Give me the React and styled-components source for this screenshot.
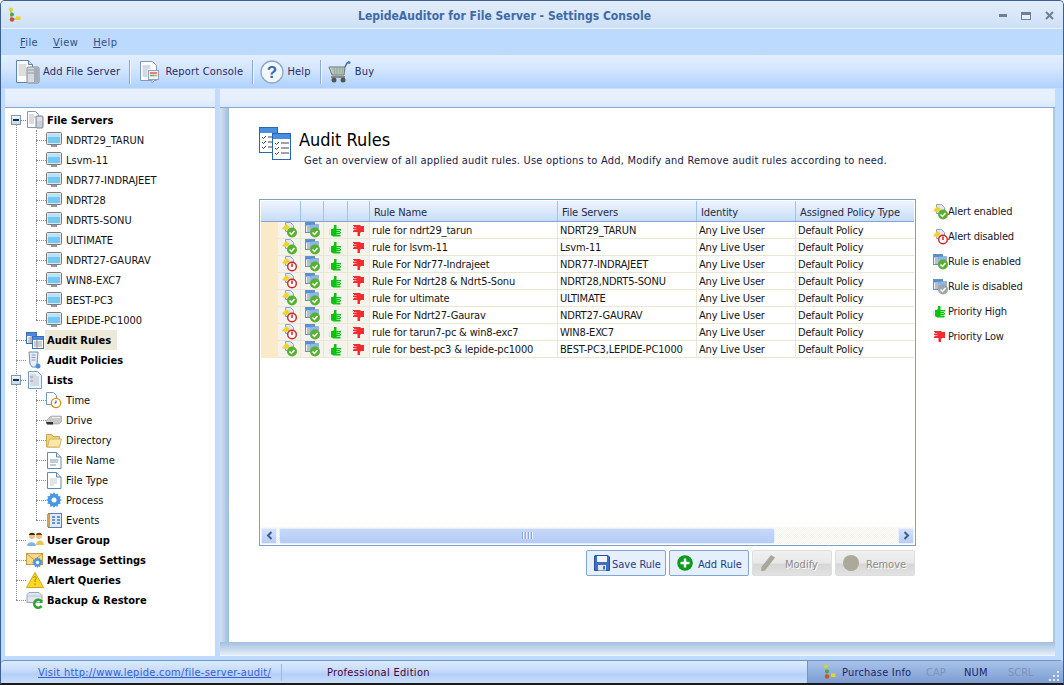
import React from "react";
import styled, { createGlobalStyle } from "styled-components";

const GlobalStyle = createGlobalStyle`
  html, body { margin: 0; padding: 0; background: #fff; }
  body { font-family: "DejaVu Sans Condensed", "DejaVu Sans", sans-serif; font-stretch: condensed; font-size: 11px; color: #111; }
  * { box-sizing: border-box; }
`;

const Window = styled.div`
  width: 1064px;
  height: 685px;
  display: flex;
  flex-direction: column;
  background: #bfdbff;
  border-top: 1px solid #3a5f92;
  border-left: 1px solid #3a5f92;
  border-right: 1px solid #3a5f92;
  border-bottom: 2px solid #1a1a1a;
  border-radius: 5px 5px 0 0;
  overflow: hidden;
`;

const TitleBar = styled.div`
  height: 28px;
  flex: none;
  display: flex;
  align-items: center;
  padding: 0 6px 0 7px;
  background: linear-gradient(#e2edfb, #d9e7f9 45%, #cfe0f6);
  border-bottom: 1px solid #e8f1fd;
`;

const Title = styled.div`
  flex: 1;
  text-align: center;
  padding: 2px 14px 0 0;
  font-size: 12px;
  font-weight: 700;
  letter-spacing: 0.03px;
  color: #3e6aa8;
`;

const Controls = styled.div`
  display: flex;
  align-items: center;
  gap: 14px;
  padding: 2px 3px 0 0;
`;

const MenuBar = styled.div`
  height: 26px;
  flex: none;
  display: flex;
  align-items: center;
  gap: 15px;
  padding: 1px 0 0 19px;
  background: #bcd9fe;
`;

const MenuItem = styled.span`
  color: #2c4f8c;
  letter-spacing: 0.4px;
  u { text-decoration: underline; }
`;

const Toolbar = styled.div`
  height: 33px;
  flex: none;
  display: flex;
  align-items: center;
  padding-left: 14px;
  letter-spacing: 0.2px;
  background: linear-gradient(#e3efff, #d3e5fe 45%, #aed1fe);
`;

const ToolButton = styled.div`
  display: flex;
  align-items: center;
  gap: ${(p) => p.$gap}px;
  color: #2a2a66;
`;

const ToolSep = styled.div`
  width: 1px;
  height: 24px;
  margin: 0 ${(p) => p.$after}px 0 9px;
  background: #8aa9d0;
  box-shadow: 1px 0 0 #f0f6ff;
`;

const Body = styled.div`
  flex: 1;
  min-height: 0;
  display: flex;
  padding: 0 0 4px 4px;
`;

const LeftPane = styled.div`
  width: 210px;
  flex: none;
  display: flex;
  flex-direction: column;
`;

const RightPane = styled.div`
  flex: 1;
  min-width: 0;
  margin-left: 4px;
  margin-right: 8px;
  display: flex;
  flex-direction: column;
  border-left: 1px solid #c9dcf2;
`;

const PaneHead = styled.div`
  height: 20px;
  flex: none;
  background: linear-gradient(#e8f0fd, #e6effc 55%, #dbe8fa);
  border-top: 1px solid #cfe0f6;
  border-bottom: 1px solid #87a9d6;
`;

const TreeBox = styled.div`
  flex: 1;
  position: relative;
  background: #fff;
  padding: 2px 0 0 1px;
`;

const Row = styled.div`
  height: 20px;
  display: flex;
  align-items: center;
  position: relative;
  padding-left: ${(p) => (p.$child ? 30 : 10)}px;
`;

const Connector = styled.span`
  width: 10px;
  flex: none;
  border-top: 1px dotted #8e8e8e;
`;

const IconSlot = styled.span`
  width: ${(p) => (p.$child ? 16 : 18)}px;
  height: 18px;
  flex: none;
  display: flex;
  align-items: center;
  justify-content: center;
  margin-right: ${(p) => (p.$child ? 2 : 1)}px;
`;

const Label = styled.span`
  font-weight: ${(p) => (p.$bold ? 700 : 400)};
  padding: 3px ${(p) => (p.$active ? 6 : 2)}px 2px 2px;
  line-height: 15px;
  background: ${(p) => (p.$active ? "#ece9d8" : "transparent")};
  color: ${(p) => (p.$bold ? "#000" : "#111")};
  white-space: nowrap;
`;

const Expander = styled.span`
  position: absolute;
  left: 5px;
  top: 5px;
  width: 10px;
  height: 10px;
  background: linear-gradient(#f4f8fc, #c5d8ea);
  border: 1px solid #7c97b2;
  &::after {
    content: "";
    position: absolute;
    left: 1px;
    top: 3px;
    width: 6px;
    height: 2px;
    background: #10304e;
  }
`;

const TrunkLine = styled.div`
  position: absolute;
  left: 11px;
  top: 16px;
  height: 476px;
  border-left: 1px dotted #8e8e8e;
`;

const BranchGroup = styled.div`
  position: relative;
  &::before {
    content: "";
    position: absolute;
    left: 30px;
    top: 0;
    bottom: 10px;
    border-left: 1px dotted #8e8e8e;
  }
`;

const Workspace = styled.div`
  flex: 1;
  min-height: 0;
  display: flex;
  flex-direction: column;
`;

const Frame = styled.div`
  flex: 1;
  min-height: 0;
  display: flex;
  background: linear-gradient(90deg, #d3e2f3, #9fbcda 9px, #c6daef 9px, #c6daef calc(100% - 8px), #a9c5e0);
  padding: 0 8px 0 9px;
`;

const Card = styled.div`
  flex: 1;
  background: #fff;
  padding: 19px 30px 0;
`;

const Foot = styled.div`
  height: 14px;
  flex: none;
  background: linear-gradient(#a3bfdc, #e4eefa);
  border-bottom: 1px solid #eef5fd;
`;

const Heading = styled.div`
  display: flex;
  gap: 8px;
  height: 72px;
`;

const HeadText = styled.div`
  padding-top: 1px;
`;

const HeadTitle = styled.h1`
  margin: 0;
  font-size: 18px;
  font-weight: 400;
  line-height: 24px;
  color: #000;
`;

const HeadSub = styled.p`
  margin: 1px 0 0 5px;
  line-height: 15px;
  letter-spacing: 0.21px;
  color: #1a1a4a;
  white-space: nowrap;
`;

const Columns = styled.div`
  display: flex;
`;

const Main = styled.div`
  width: 657px;
  flex: none;
  display: flex;
  flex-direction: column;
`;

const GridBox = styled.div`
  height: 347px;
  display: flex;
  flex-direction: column;
  border: 1px solid #7f9fc5;
  padding: 1px;
  background: #fff;
`;

const GridHead = styled.div`
  display: grid;
  grid-template-columns: 40px 23px 24px 22px 188px 139px 99px 1fr;
  height: 21px;
  flex: none;
  background: linear-gradient(#edf4fe, #dbe9fb 50%, #c7dcf7);
  border-bottom: 1px solid #82a5d2;
`;

const HeadCell = styled.div`
  display: flex;
  align-items: center;
  padding: 2px 0 0 4px;
  border-right: 1px solid #9cc4ee;
  color: #1e2a44;
  letter-spacing: -0.1px;
  white-space: nowrap;
  &:last-child { border-right: 0; }
`;

const GridRows = styled.div`
  flex: 1;
  min-height: 0;
`;

const GridRow = styled.div`
  display: grid;
  grid-template-columns: 17px 23px 23px 24px 22px 188px 139px 99px 1fr;
  height: 17px;
`;

const Gutter = styled.div`
  background: #fbeaca;
`;

const GlyphCell = styled.div`
  background: #f5f4ec;
  border-right: 1px solid #e9e6d4;
  border-bottom: 1px solid #e9e6d4;
  display: flex;
  align-items: center;
  justify-content: center;
`;

const TextCell = styled.div`
  display: flex;
  align-items: center;
  padding-left: 2px;
  border-right: 1px solid #e9e6d4;
  border-bottom: 1px solid #e9e6d4;
  color: #151515;
  letter-spacing: -0.17px;
  white-space: nowrap;
  &:last-child { border-right: 0; }
`;

const HScroll = styled.div`
  height: 17px;
  flex: none;
  display: flex;
  align-items: center;
  background: repeating-conic-gradient(#f4f3ea 0% 25%, #fff 0% 50%) 0 0 / 2px 2px;
`;

const ScrollBtn = styled.div`
  width: 16px;
  height: 16px;
  flex: none;
  display: flex;
  align-items: center;
  justify-content: center;
  background: linear-gradient(#d5e3fb, #b6cdf4);
  border: 1px solid #e9f0fc;
`;

const ScrollThumb = styled.div`
  width: 496px;
  height: 16px;
  margin-left: 2px;
  display: flex;
  align-items: center;
  justify-content: center;
  gap: 1px;
  background: linear-gradient(#c6d8f9, #b6ccf6);
  border: 1px solid #e6eefb;
  border-radius: 2px;
`;

const Grip = styled.i`
  width: 1px;
  height: 7px;
  background: #8aa6d8;
  box-shadow: 1px 0 0 #eef4ff;
  margin-right: 1px;
`;

const ScrollFill = styled.div`
  flex: 1;
`;

const Actions = styled.div`
  display: flex;
  justify-content: flex-end;
  gap: 3px;
  margin-top: 4px;
  margin-right: 1px;
`;

const ActionBtn = styled.button`
  width: 80px;
  height: 26px;
  padding: 2px 0 0 7px;
  display: flex;
  align-items: center;
  gap: ${(p) => p.$gap}px;
  font: inherit;
  letter-spacing: 0;
  border-radius: 2px;
  border: 1px solid ${(p) => (p.disabled ? "#dedede" : "#7fa5d6")};
  background: ${(p) => (p.disabled ? "linear-gradient(#f0f0f0 0%, #e8e8e8 50%, #d6d6d6 55%, #e2e2e2 100%)" : "#e6effc")};
  color: ${(p) => (p.disabled ? "#8c8c8c" : "#1c3c88")};
  text-shadow: ${(p) => (p.disabled ? "1px 1px 0 #fff" : "none")};
  svg { margin-top: -2px; }
`;

const Legend = styled.div`
  padding-left: 17px;
  padding-top: 5px;
  display: flex;
  flex-direction: column;
  gap: 10px;
`;

const LegendItem = styled.div`
  display: flex;
  align-items: center;
  height: 15px;
  color: #1a1a2a;
  letter-spacing: -0.17px;
  white-space: nowrap;
`;

const LegendGlyph = styled.span`
  width: 15px;
  flex: none;
  display: flex;
  align-items: center;
`;

const StatusBar = styled.div`
  height: 23px;
  flex: none;
  display: flex;
  align-items: center;
  background: linear-gradient(#dceafd, #c9defb 40%, #b4d0f8 60%, #c9ddfa);
  border-top: 1px solid #6f93c4;
  padding-left: 37px;
  border-radius: 4px 4px 0 0;
`;

const StatusLink = styled.a`
  width: 243px;
  color: #3a5fd0;
  letter-spacing: 0.28px;
  text-decoration: underline;
  white-space: nowrap;
`;

const StatusSep = styled.span`
  width: 1px;
  height: 17px;
  background: #9db8dc;
`;

const Edition = styled.span`
  margin-left: 45px;
  color: #4a0038;
  letter-spacing: 0.3px;
  white-space: nowrap;
`;

const StatusRight = styled.div`
  margin-left: auto;
  width: 256px;
  height: 100%;
  display: flex;
  align-items: center;
  position: relative;
  padding-left: 15px;
  background: linear-gradient(#a8c3ea, #92b0de 50%, #7c9dd2);
  border-left: 1px solid #6f93c4;
`;

const StatusText = styled.span`
  color: ${(p) => (p.$off ? "#7f93b5" : "#1f1f6a")};
  width: ${(p) => p.$w}px;
  margin-left: ${(p) => p.$ml || 0}px;
  letter-spacing: ${(p) => (p.$off ? 0 : 0.2)}px;
  white-space: nowrap;
`;

const Resize = styled.svg`
  position: absolute;
  right: 3px;
  bottom: 2px;
`;

/* icons */
const Logo = () => (
  <svg width="16" height="16" viewBox="0 0 16 16">
    <path d="M3 3v9h6" stroke="#a8a86a" strokeWidth="1" fill="none" />
    <circle cx="3" cy="2.500" r="2" fill="#d8d820" />
    <circle cx="4" cy="7.500" r="2" fill="#45a845" />
    <circle cx="4" cy="12.500" r="2.200" fill="#c8502a" />
    <rect x="8" y="9.500" width="4.500" height="3.500" fill="#f0d020" />
  </svg>
);

const Monitor = () => (
  <svg width="16" height="16" viewBox="0 0 16 16">
    <rect x="0.5" y="0.5" width="15" height="12" rx="1" fill="#e4e4e4" stroke="#7c7c7c" />
    <rect x="2" y="2" width="12" height="9" fill="#72c8f4" />
    <rect x="2" y="2" width="12" height="3" fill="#b4e4fc" />
    <rect x="5" y="13" width="6" height="2" fill="#999" />
  </svg>
);

const ServerDoc = () => (
  <svg width="18" height="18" viewBox="0 0 18 18">
    <path d="M1.5.5h8l3 3v13h-11z" fill="#fff" stroke="#7a9cbc" />
    <path d="M3 4h5M3 6h7M3 8h5M3 10h5M3 12h5" stroke="#b8b8b8" />
    <rect x="10" y="5" width="7" height="12" rx="1" fill="#c8ced6" stroke="#7d8794" />
    <path d="M11 7h5M11 9h5" stroke="#f4f4f4" />
  </svg>
);

const TableIcon = () => (
  <svg width="18" height="18" viewBox="0 0 18 18">
    <rect x="0.5" y="1.5" width="10" height="11" fill="#fff" stroke="#3a6cb8" />
    <rect x="1" y="2" width="9" height="3" fill="#4a8ade" />
    <path d="M2 7h7M2 9h7M2 11h7M5 5v7" stroke="#9a9a9a" />
    <rect x="6.5" y="5.5" width="11" height="12" fill="#fff" stroke="#3a6cb8" />
    <rect x="7" y="6" width="10" height="3" fill="#4a8ade" />
    <path d="M8 11h8M8 13h8M8 15h8M11 9v8" stroke="#9a9a9a" />
  </svg>
);

const ScrollIcon = () => (
  <svg width="18" height="18" viewBox="0 0 18 18">
    <path d="M3 1h9l-1 12 3 3H6l-2-3z" fill="#e6eef8" stroke="#6e8eb0" />
    <path d="M5.500 4h4M5.500 6.500h4M5.500 9h4" stroke="#7e9ac0" />
    <circle cx="12" cy="15" r="2.500" fill="#4a90e0" />
  </svg>
);

const ListDoc = () => (
  <svg width="16" height="18" viewBox="0 0 16 18">
    <path d="M1.500.5h9l4 4v13h-13z" fill="#eaf2fb" stroke="#7a9cbc" />
    <path d="M3 4h6M3 6h9M3 8h9M3 10h9M3 12h9M3 14h9" stroke="#b6c2d2" />
    <path d="M3 6h3M3 10h3" stroke="#d88070" />
  </svg>
);

const ClockDoc = () => (
  <svg width="16" height="17" viewBox="0 0 16 17">
    <path d="M.5.5h7l3 3v9h-10z" fill="#fff" stroke="#7a9cbc" />
    <circle cx="10" cy="11" r="4.700" fill="#fff" stroke="#d8901c" strokeWidth="1.300" />
    <path d="M10 8.500V11h-1.500" stroke="#444" fill="none" />
  </svg>
);

const DriveIcon = () => (
  <svg width="16" height="12" viewBox="0 0 16 12">
    <path d="M0 7l5-5h10l1 1v4l-3 3H1z" fill="#c8c8c8" stroke="#8a8a8a" strokeWidth="0.500" />
    <path d="M0 8h7v2.500H1z" fill="#333" />
    <path d="M6 3.500h8" stroke="#f2f2f2" />
  </svg>
);

const FolderIcon = () => (
  <svg width="16" height="15" viewBox="0 0 16 15">
    <path d="M.5 14V1.500h5l1.500 2h6.500V14z" fill="#f2d47c" stroke="#c8a850" />
    <path d="M1.500 14l2-8h12l-2 8z" fill="#fbe8a8" stroke="#d4b464" />
  </svg>
);

const FileLines = ({ dense }) => (
  <svg width="15" height="17" viewBox="0 0 15 17">
    <path d="M.5.500h9l4.500 4.500v11.500H.5z" fill="#fff" stroke="#5f8ab0" />
    <path d="M9.500.500v4.500H14" fill="#dbe8f4" stroke="#5f8ab0" />
    {dense ? (
      <path d="M3 7h7M3 9h7M3 11h7M3 13h4" stroke="#c4ccd6" />
    ) : (
      <path d="M3 8h8.500M3 10h8M3 13h6" stroke="#7e9ab6" />
    )}
  </svg>
);

const GearIcon = ({ s = 16 }) => (
  <svg width={s} height={s} viewBox="0 0 16 16">
    <path d="M8 0l1.200 2.300 2.500-.8.400 2.600 2.600.4-.8 2.500L16 8l-2.100 1.200.8 2.500-2.600.4-.4 2.600-2.500-.8L8 16l-1.200-2.100-2.500.8-.4-2.600-2.600-.4.8-2.500L0 8l2.100-1.200-.8-2.500 2.600-.4.400-2.600 2.500.8z" fill="#4a97e4" />
    <circle cx="8" cy="8" r="2.500" fill="#fff" />
  </svg>
);

const EventsIcon = () => (
  <svg width="15" height="15" viewBox="0 0 15 15">
    <rect x="1.500" y="0.500" width="13" height="14" fill="#dfeaf6" stroke="#5a7fa8" />
    <rect x="0" y="1" width="3" height="13" fill="#d8a040" />
    <path d="M5 4h3M10 4h3M5 7h3M10 7h3M5 10h3M10 10h3" stroke="#3f78c4" strokeWidth="1.500" />
  </svg>
);

const UsersIcon = () => (
  <svg width="18" height="16" viewBox="0 0 18 16">
    <circle cx="6" cy="4" r="3" fill="#f0c080" />
    <path d="M3 3c0-3 6-3 6 0z" fill="#3a2a18" />
    <path d="M1 14c0-5 9-5 9 0z" fill="#7db4e8" />
    <circle cx="13" cy="4" r="3" fill="#f0c080" />
    <path d="M10 3c0-3 6-3 6 0z" fill="#6a4a18" />
    <path d="M10 13c0-6 8-6 8 0z" fill="#e8c850" />
  </svg>
);

const MailGear = () => (
  <svg width="18" height="16" viewBox="0 0 18 16">
    <rect x="0.500" y="1.500" width="16" height="11" fill="#f6d98a" stroke="#c89c40" />
    <path d="M1 2l7.500 6L16 2" fill="none" stroke="#c89c40" />
    <g transform="translate(6 5)"><GearIcon s={11} /></g>
  </svg>
);

const WarnIcon = () => (
  <svg width="18" height="16" viewBox="0 0 18 16">
    <path d="M9 .500L17.500 15.500H.5z" fill="#f8d820" stroke="#d0a818" />
    <path d="M7.500 5.500c1-1.500 3.500-.5 2.500 1.500L9 8.500V10M9 11.500v1.500" stroke="#a08010" fill="none" />
  </svg>
);

const BackupIcon = () => (
  <svg width="18" height="18" viewBox="0 0 18 18">
    <path d="M3 1.500h10l3 3v7H1v-8z" fill="#dfe6ee" stroke="#9aa8b8" />
    <path d="M1 5h15" stroke="#b8c4d2" />
    <path d="M15.500 10.500a4 4 0 1 0 0 4.500" fill="none" stroke="#30a030" strokeWidth="2.500" />
    <path d="M16.500 9v3h-3z" fill="#30a030" />
  </svg>
);

const Badge = ({ on, power }) =>
  power ? (
    <g>
      <circle cx="10" cy="10.500" r="4.300" fill="#fff" stroke="#d02020" strokeWidth="1.400" />
      <path d="M10 7.500v3.500" stroke="#d02020" strokeWidth="1.500" />
    </g>
  ) : (
    <g>
      <circle cx="10" cy="10.500" r="5" fill={on ? "#58b030" : "#a0a4ac"} />
      <path d="M7.500 10.500l2 2 3-3.500" stroke="#fff" strokeWidth="1.500" fill="none" />
    </g>
  );

const AlertIcon = ({ on }) => (
  <svg width="15" height="16" viewBox="0 0 15 16">
    <path d="M3.500 .5h5l3 3v6h-8z" fill="#dfe8f4" stroke="#8aa4c4" />
    <path d="M0 7l4-5 3.500 2.500-1 2.500-3.500 1z" fill="#f2d22a" />
    <Badge on={on} power={!on} />
  </svg>
);

const RuleIcon = ({ on = true }) => (
  <svg width="15" height="16" viewBox="0 0 15 16">
    <rect x="0.500" y="0.500" width="9" height="10" fill="#eef3fa" stroke="#6a90c0" />
    <rect x="1" y="1" width="8" height="2.500" fill="#4f90d8" />
    <path d="M2 5h3M2 7h3M2 9h3" stroke="#8a8a8a" />
    <rect x="5.500" y="2.500" width="8" height="8" fill="#8ab8e8" stroke="#6a90c0" strokeWidth="0.500" />
    <Badge on={on} />
  </svg>
);

const ThumbUp = () => (
  <svg width="13" height="13" viewBox="0 0 13 13">
    <path d="M0 6h1v5H0z" fill="#c8eec8" />
    <path d="M2 5h2l1-1V1h2.500v4H12v1.500h-1V8h1v1.500h-1V11h.5v1.500H4L3 11.500H2z" fill="#0cc20c" />
    <path d="M7.500 6.500H11M7.500 8.500H11M7.500 10.500H11" stroke="#e8ffe8" strokeWidth="0.600" />
  </svg>
);

const ThumbDown = () => (
  <svg width="13" height="13" viewBox="0 0 13 13">
    <path d="M1 1h7l1 1h3v6H9l-1 1v3H5.500V8H1V6.500h1V5H1V3.500h1V2H1z" fill="#f22c30" />
    <path d="M1.500 3.500h3M1.500 5.500h3" stroke="#ffe0e0" strokeWidth="0.600" />
  </svg>
);

const ReportIcon = () => (
  <svg width="22" height="24" viewBox="0 0 22 24">
    <path d="M1.500 1.500h12l4 4v15h-16z" fill="#fff" stroke="#7e9abc" />
    <path d="M3.500 6h8M3.500 8h8M3.500 10h5M3.500 12h5M3.500 14h5M3.500 16h5" stroke="#a8b4c4" />
    <rect x="9.500" y="10.500" width="10" height="9" fill="#eef3f8" stroke="#8ea4bc" />
    <path d="M11 13h7" stroke="#e05a5a" strokeWidth="1.500" />
    <path d="M11 15.500h4" stroke="#58b858" strokeWidth="1.500" />
    <path d="M15 15.500h3" stroke="#e0b040" strokeWidth="1.500" />
    <path d="M13 20v3l3-3" fill="#fff" stroke="#8ea4bc" />
  </svg>
);

const AddServerIcon = () => (
  <svg width="25" height="25" viewBox="0 0 25 25">
    <path d="M1.500 1.500h12l4 4v18h-16z" fill="#fff" stroke="#5e86ac" />
    <path d="M13.500 1.500v4h4" fill="#d0e0f0" stroke="#5e86ac" />
    <path d="M3.500 6h8M3.500 8h8M3.500 10h8M3.500 12h8M3.500 14h8M3.500 16h8" stroke="#bcbcbc" />
    <rect x="12" y="8" width="12" height="16" rx="1.500" fill="#d6dade" stroke="#7d8894" />
    <path d="M13 11h10M13 14h10" stroke="#8c98a4" />
    <rect x="19" y="9" width="4" height="14" fill="#a4acb6" />
  </svg>
);

const HelpIcon = () => (
  <svg width="24" height="24" viewBox="0 0 24 24">
    <circle cx="12" cy="12" r="11" fill="#f2f7fc" stroke="#8aa8c8" strokeWidth="1.300" />
    <text x="12" y="18" fontFamily="Liberation Sans, sans-serif" fontWeight="700" fontSize="17" textAnchor="middle" fill="#3a6ab0">?</text>
  </svg>
);

const CartIcon = () => (
  <svg width="23" height="22" viewBox="0 0 23 22">
    <path d="M1 6h16l-1 8H4z" fill="#c8dcc8" stroke="#6a7480" />
    <path d="M3 8h14M4 10h12M4 12h12M6 6l1 8M9 6v8M12 6v8M15 6l-1 8" stroke="#88a090" strokeWidth="0.700" />
    <path d="M17 6l2-4 2-1" stroke="#5a6a80" strokeWidth="1.500" fill="none" />
    <circle cx="21" cy="1.500" r="1.500" fill="#4a80c0" />
    <rect x="3" y="15" width="14" height="2" fill="#8a8a8a" />
    <circle cx="6" cy="19" r="2.500" fill="#555" />
    <circle cx="15" cy="19" r="2.500" fill="#555" />
  </svg>
);

const RulesHeadIcon = () => (
  <svg width="32" height="33" viewBox="0 0 32 33">
    <rect x="0.500" y="0.500" width="18" height="25" fill="#fff" stroke="#2a64b8" />
    <rect x="1" y="1" width="17" height="5" fill="#4a8ee0" />
    <path d="M3 10l1.500 1.500L7 9M3 15l1.500 1.500L7 14M3 20l1.500 1.500L7 19M9 10h8M9 15h8M9 20h8" stroke="#444" fill="none" />
    <rect x="13.500" y="6.500" width="18" height="26" fill="#fff" stroke="#2a64b8" />
    <rect x="14" y="7" width="17" height="5" fill="#4a8ee0" />
    <path d="M16 16l1.500 1.500L20 15M16 21l1.500 1.500L20 20M16 26l1.500 1.500L20 25M22 16h8M22 21h8M22 26h8" stroke="#444" fill="none" />
  </svg>
);

const SaveIcon = () => (
  <svg width="16" height="16" viewBox="0 0 16 16">
    <path d="M1 .5h13l1.500 1.500v13.500H.5V1z" fill="#3d70c4" stroke="#24509c" />
    <rect x="3" y="1" width="10" height="6" fill="#f2f6fb" />
    <rect x="4" y="10" width="8" height="5.500" fill="#dfe6ee" />
    <rect x="9" y="11" width="2" height="3.500" fill="#3d70c4" />
  </svg>
);

const AddIcon = () => (
  <svg width="16" height="16" viewBox="0 0 16 16">
    <circle cx="8" cy="8" r="7.800" fill="#0a9a1c" />
    <path d="M8 3.500v9M3.500 8h9" stroke="#fff" strokeWidth="2.500" />
  </svg>
);

const PencilIcon = () => (
  <svg width="16" height="16" viewBox="0 0 16 16">
    <path d="M11 0l4 2.500L5 15.500 1 16l.5-4z" fill="#aaa69a" />
  </svg>
);

const GrayDot = () => (
  <svg width="16" height="16" viewBox="0 0 16 16">
    <circle cx="8" cy="8" r="8" fill="#aca89a" />
  </svg>
);

const servers = ["NDRT29_TARUN", "Lsvm-11", "NDR77-INDRAJEET", "NDRT28", "NDRT5-SONU", "ULTIMATE", "NDRT27-GAURAV", "WIN8-EXC7", "BEST-PC3", "LEPIDE-PC1000"];

const lists = [
  ["Time", <ClockDoc />],
  ["Drive", <DriveIcon />],
  ["Directory", <FolderIcon />],
  ["File Name", <FileLines />],
  ["File Type", <FileLines dense />],
  ["Process", <GearIcon />],
  ["Events", <EventsIcon />],
];

const rules = [
  ["rule for ndrt29_tarun", "NDRT29_TARUN", true],
  ["rule for lsvm-11", "Lsvm-11", true],
  ["Rule For Ndr77-Indrajeet", "NDR77-INDRAJEET", false],
  ["Rule For Ndrt28 & Ndrt5-Sonu", "NDRT28,NDRT5-SONU", false],
  ["rule for ultimate", "ULTIMATE", true],
  ["Rule For Ndrt27-Gaurav", "NDRT27-GAURAV", false],
  ["rule for tarun7-pc & win8-exc7", "WIN8-EXC7", false],
  ["rule for best-pc3 & lepide-pc1000", "BEST-PC3,LEPIDE-PC1000", true],
];

const legend = [
  ["Alert enabled", <AlertIcon on />],
  ["Alert disabled", <AlertIcon />],
  ["Rule is enabled", <RuleIcon />],
  ["Rule is disabled", <RuleIcon on={false} />],
  ["Priority High", <ThumbUp />],
  ["Priority Low", <ThumbDown />],
];

function TreeRow({ icon, label, child, bold, active, expand }) {
  return (
    <Row $child={child}>
      {expand && <Expander />}
      <Connector />
      <IconSlot $child={child}>{icon}</IconSlot>
      <Label $bold={bold} $active={active}>{label}</Label>
    </Row>
  );
}

export default function App() {
  return (
    <Window>
      <GlobalStyle />
      <TitleBar>
        <Logo />
        <Title>LepideAuditor for File Server - Settings Console</Title>
        <Controls>
          <svg width="8" height="3" viewBox="0 0 8 3"><rect width="8" height="3" fill="#6e8096" /></svg>
          <svg width="10" height="8" viewBox="0 0 10 8"><rect x="0.500" y="0.500" width="9" height="7" fill="#e6f0fb" stroke="#6e8096" /><rect width="10" height="3" fill="#6e8096" /></svg>
          <svg width="9" height="9" viewBox="0 0 9 9"><path d="M1 1l7 7M8 1L1 8" stroke="#6e8096" strokeWidth="2" /></svg>
        </Controls>
      </TitleBar>
      <MenuBar>
        <MenuItem><u>F</u>ile</MenuItem>
        <MenuItem><u>V</u>iew</MenuItem>
        <MenuItem><u>H</u>elp</MenuItem>
      </MenuBar>
      <Toolbar>
        <ToolButton $gap={3}><AddServerIcon />Add File Server</ToolButton>
        <ToolSep $after={9} />
        <ToolButton $gap={4}><ReportIcon />Report Console</ToolButton>
        <ToolSep $after={7} />
        <ToolButton $gap={3}><HelpIcon />Help</ToolButton>
        <ToolSep $after={7} />
        <ToolButton $gap={4}><CartIcon />Buy</ToolButton>
      </Toolbar>
      <Body>
        <LeftPane>
          <PaneHead />
          <TreeBox>
            <TrunkLine />
            <TreeRow icon={<ServerDoc />} label="File Servers" bold expand />
            <BranchGroup>
              {servers.map((name) => (
                <TreeRow key={name} child icon={<Monitor />} label={name} />
              ))}
            </BranchGroup>
            <TreeRow icon={<TableIcon />} label="Audit Rules" bold active />
            <TreeRow icon={<ScrollIcon />} label="Audit Policies" bold />
            <TreeRow icon={<ListDoc />} label="Lists" bold expand />
            <BranchGroup>
              {lists.map(([name, icon]) => (
                <TreeRow key={name} child icon={icon} label={name} />
              ))}
            </BranchGroup>
            <TreeRow icon={<UsersIcon />} label="User Group" bold />
            <TreeRow icon={<MailGear />} label="Message Settings" bold />
            <TreeRow icon={<WarnIcon />} label="Alert Queries" bold />
            <TreeRow icon={<BackupIcon />} label="Backup & Restore" bold />
          </TreeBox>
        </LeftPane>
        <RightPane>
          <PaneHead />
          <Workspace>
            <Frame>
              <Card>
                <Heading>
                  <RulesHeadIcon />
                  <HeadText>
                    <HeadTitle>Audit Rules</HeadTitle>
                    <HeadSub>Get an overview of all applied audit rules. Use options to Add, Modify and Remove audit rules according to need.</HeadSub>
                  </HeadText>
                </Heading>
                <Columns>
                  <Main>
                    <GridBox>
                      <GridHead>
                        <HeadCell />
                        <HeadCell />
                        <HeadCell />
                        <HeadCell />
                        <HeadCell>Rule Name</HeadCell>
                        <HeadCell>File Servers</HeadCell>
                        <HeadCell>Identity</HeadCell>
                        <HeadCell>Assigned Policy Type</HeadCell>
                      </GridHead>
                      <GridRows>
                        {rules.map(([name, server, on]) => (
                          <GridRow key={name}>
                            <Gutter />
                            <GlyphCell><AlertIcon on={on} /></GlyphCell>
                            <GlyphCell><RuleIcon /></GlyphCell>
                            <GlyphCell><ThumbUp /></GlyphCell>
                            <GlyphCell><ThumbDown /></GlyphCell>
                            <TextCell>{name}</TextCell>
                            <TextCell>{server}</TextCell>
                            <TextCell>Any Live User</TextCell>
                            <TextCell>Default Policy</TextCell>
                          </GridRow>
                        ))}
                      </GridRows>
                      <HScroll>
                        <ScrollBtn>
                          <svg width="7" height="9" viewBox="0 0 7 9"><path d="M5.500 1L2 4.500 5.500 8" stroke="#3d5f96" strokeWidth="2" fill="none" /></svg>
                        </ScrollBtn>
                        <ScrollThumb><Grip /><Grip /><Grip /><Grip /></ScrollThumb>
                        <ScrollFill />
                        <ScrollBtn>
                          <svg width="7" height="9" viewBox="0 0 7 9"><path d="M1.500 1L5 4.500 1.500 8" stroke="#3d5f96" strokeWidth="2" fill="none" /></svg>
                        </ScrollBtn>
                      </HScroll>
                    </GridBox>
                    <Actions>
                      <ActionBtn $gap={2}><SaveIcon />Save Rule</ActionBtn>
                      <ActionBtn $gap={5}><AddIcon />Add Rule</ActionBtn>
                      <ActionBtn disabled $gap={9}><PencilIcon />Modify</ActionBtn>
                      <ActionBtn disabled $gap={7}><GrayDot />Remove</ActionBtn>
                    </Actions>
                  </Main>
                  <Legend>
                    {legend.map(([name, icon]) => (
                      <LegendItem key={name}><LegendGlyph>{icon}</LegendGlyph>{name}</LegendItem>
                    ))}
                  </Legend>
                </Columns>
              </Card>
            </Frame>
            <Foot />
          </Workspace>
        </RightPane>
      </Body>
      <StatusBar>
        <StatusLink>Visit http://www.lepide.com/file-server-audit/</StatusLink>
        <StatusSep />
        <Edition>Professional Edition</Edition>
        <StatusRight>
          <Logo />
          <StatusText $w={70} $ml={3}>Purchase Info</StatusText>
          <StatusText $off $w={38} $ml={14}>CAP</StatusText>
          <StatusText $w={44}>NUM</StatusText>
          <StatusText $off $w={30}>SCRL</StatusText>
          <Resize width="11" height="11" viewBox="0 0 11 11">
            <path d="M8 1h2v2H8zM4 5h2v2H4zM8 5h2v2H8zM0 9h2v2H0zM4 9h2v2H4zM8 9h2v2H8z" fill="#e8f0fb" />
          </Resize>
        </StatusRight>
      </StatusBar>
    </Window>
  );
}
